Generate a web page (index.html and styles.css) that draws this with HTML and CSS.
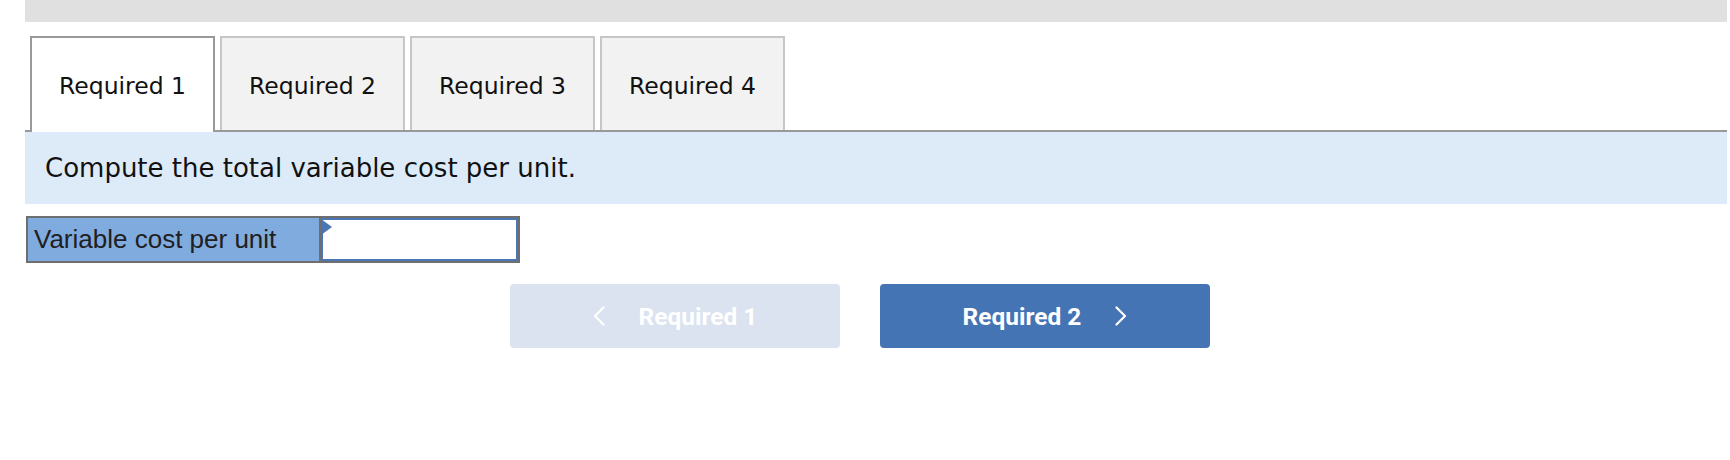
FILE: index.html
```html
<!DOCTYPE html>
<html lang="en">
<head>
<meta charset="utf-8">
<title>Required</title>
<link rel="stylesheet" href="styles.css">
</head>
<body>
<div class="page">
  <div class="topbar"></div>
  <div class="tabs">
    <div class="tab active">Required 1</div>
    <div class="tab">Required 2</div>
    <div class="tab">Required 3</div>
    <div class="tab">Required 4</div>
  </div>
  <div class="prompt">Compute the total variable cost per unit.</div>
  <div class="answer">
    <div class="label">Variable cost per unit</div>
    <div class="cell">
      <input class="field" type="text" aria-label="Variable cost per unit">
      <span class="flag"></span>
    </div>
  </div>
  <div class="nav">
    <button class="btn prev" type="button">
      <svg class="chev" viewBox="0 0 12 20" width="12" height="20"><polyline points="10.5,1.5 2,10 10.5,18.5" fill="none" stroke="#fff" stroke-width="2.2" stroke-linecap="round" stroke-linejoin="round"/></svg>
      <span>Required 1</span>
    </button>
    <button class="btn next" type="button">
      <span>Required 2</span>
      <svg class="chev" viewBox="0 0 12 20" width="12" height="20"><polyline points="1.5,1.5 10,10 1.5,18.5" fill="none" stroke="#fff" stroke-width="2.2" stroke-linecap="round" stroke-linejoin="round"/></svg>
    </button>
  </div>
</div>
</body>
</html>
```

FILE: styles.css
```css
html, body {
  margin: 0;
  padding: 0;
  background: #ffffff;
}

.page {
  padding: 0 3px 0 25px;
}

.topbar {
  height: 22px;
  background: #e0e0e0;
}

.tabs {
  margin-top: 14px;
  display: flex;
  gap: 5px;
  padding-left: 5px;
  border-bottom: 2px solid #999999;
}

.tab {
  box-sizing: border-box;
  width: 185px;
  height: 94px;
  border: 2px solid #c6c6c6;
  border-bottom: none;
  background: #f2f2f2;
  display: flex;
  align-items: center;
  justify-content: center;
  padding-top: 3px;
  font-family: "DejaVu Sans", Verdana, sans-serif;
  font-size: 23.5px;
  color: #111111;
}

.tab.active {
  height: 96px;
  margin-bottom: -2px;
  padding-bottom: 2px;
  background: #ffffff;
  border-color: #999999;
}

.prompt {
  background: #ddebf8;
  padding: 21px 20px;
  font-family: "DejaVu Sans", Verdana, sans-serif;
  font-size: 26px;
  line-height: 30px;
  color: #111111;
}

.answer {
  margin-top: 12px;
  margin-left: 1px;
  box-sizing: border-box;
  width: 494px;
  height: 47px;
  display: flex;
  border: 2px solid #6e6e6e;
}

.label {
  box-sizing: border-box;
  width: 293px;
  border-right: 2px solid #6e6e6e;
  background: #80abdf;
  padding-left: 6px;
  display: flex;
  align-items: center;
  font-family: "Liberation Sans", Arial, sans-serif;
  font-size: 26px;
  color: #202020;
}

.cell {
  flex: 1;
  position: relative;
}

.field {
  display: block;
  box-sizing: border-box;
  width: 100%;
  height: 100%;
  margin: 0;
  padding: 0;
  border: 2px solid #4a76b4;
  background: #ffffff;
  outline: none;
}

.flag {
  position: absolute;
  left: 0;
  top: 1px;
  width: 0;
  height: 0;
  border-top: 8px solid transparent;
  border-bottom: 8px solid transparent;
  border-left: 11px solid #4a76b4;
}

.nav {
  margin-top: 21px;
  padding-left: 485px;
  display: flex;
  gap: 40px;
}

.btn {
  box-sizing: border-box;
  width: 330px;
  height: 64px;
  padding: 0;
  border: none;
  border-radius: 4px;
  display: flex;
  align-items: center;
  justify-content: center;
  gap: 34px;
  font-family: Roboto, "Liberation Sans", sans-serif;
  font-weight: 700;
  font-size: 24.5px;
  color: #ffffff;
}

.prev {
  background: #dae3ef;
}

.next {
  background: #4574b5;
}

.chev {
  display: block;
}
```
